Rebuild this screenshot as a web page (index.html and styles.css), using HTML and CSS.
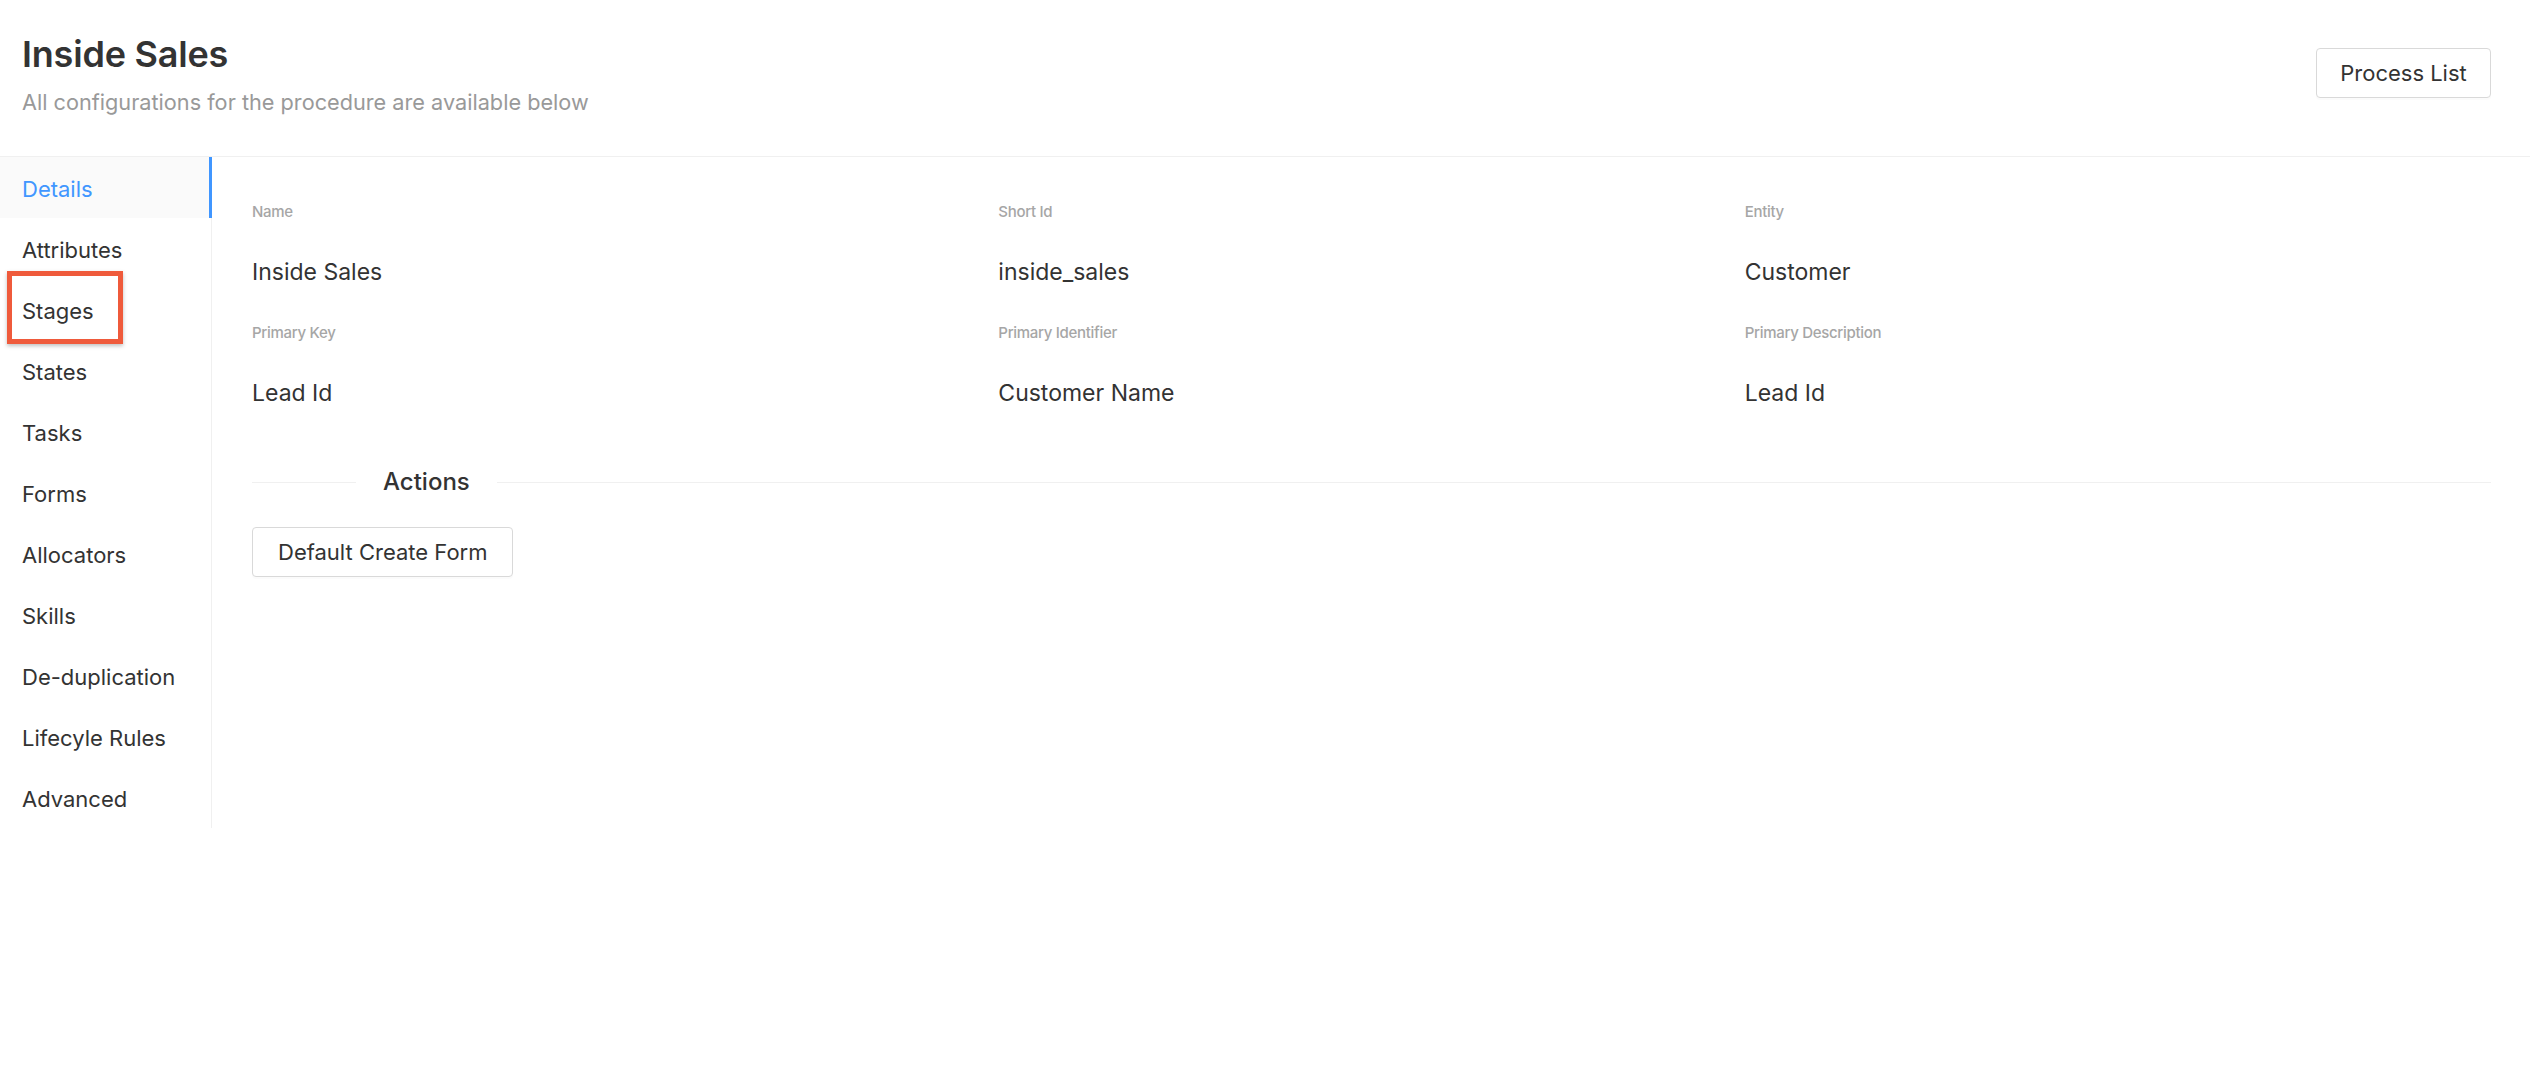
FILE: index.html
```html
<!DOCTYPE html>
<html lang="en">
<head>
  <meta charset="UTF-8">
  <meta name="viewport" content="width=device-width, initial-scale=1.0">
  <title>Inside Sales</title>
  <link rel="stylesheet" href="styles.css">
</head>
<body>
  <!-- Header -->
  <div class="page-header">
    <div class="heading">
      <h1 class="title">Inside Sales</h1>
      <div class="subtitle">All configurations for the procedure are available below</div>
    </div>
    <button class="btn btn-header">Process List</button>
  </div>

  <div class="layout">
    <!-- Left tabs -->
    <div class="side-nav">
      <div class="nav-item active">Details</div>
      <div class="nav-item">Attributes</div>
      <div class="nav-item">Stages</div>
      <div class="nav-item">States</div>
      <div class="nav-item">Tasks</div>
      <div class="nav-item">Forms</div>
      <div class="nav-item">Allocators</div>
      <div class="nav-item">Skills</div>
      <div class="nav-item">De-duplication</div>
      <div class="nav-item">Lifecyle Rules</div>
      <div class="nav-item">Advanced</div>
      <div class="highlight"></div>
    </div>

    <!-- Details -->
    <div class="content">
      <div class="details">
        <div class="field">
          <div class="label">Name</div>
          <div class="value">Inside Sales</div>
        </div>
        <div class="field">
          <div class="label">Short Id</div>
          <div class="value">inside_sales</div>
        </div>
        <div class="field">
          <div class="label">Entity</div>
          <div class="value">Customer</div>
        </div>
        <div class="field">
          <div class="label">Primary Key</div>
          <div class="value">Lead Id</div>
        </div>
        <div class="field">
          <div class="label">Primary Identifier</div>
          <div class="value">Customer Name</div>
        </div>
        <div class="field">
          <div class="label">Primary Description</div>
          <div class="value">Lead Id</div>
        </div>
      </div>

      <div class="divider">
        <span class="divider-text">Actions</span>
      </div>

      <button class="btn btn-action">Default Create Form</button>
    </div>
  </div>
</body>
</html>
```

FILE: styles.css
```css
/* General */
body {
  margin: 0;
  padding: 0;
  background-color: #ffffff;
  font-family: Inter, "Noto Sans", sans-serif;
  color: #333333;
}

.btn {
  background-color: #ffffff;
  color: #333333;
  border: 1px solid #d9d9d9;
  border-radius: 4px;
  height: 50px;
  font-family: inherit;
  font-size: 22px;
  box-shadow: 0 2px 0 rgba(0, 0, 0, 0.016);
  cursor: pointer;
}

/* Header */
.page-header {
  display: flex;
  justify-content: space-between;
  align-items: flex-start;
  padding: 32px 39px 39px 22px;
  border-bottom: 1px solid #f0f0f0;
}

.title {
  margin: 0;
  font-size: 36px;
  line-height: 44px;
  font-weight: 600;
  letter-spacing: -0.2px;
  color: #333333;
}

.subtitle {
  margin-top: 11px;
  font-size: 21.7px;
  line-height: 30px;
  color: #999999;
}

.btn-header {
  margin-top: 16px;
  width: 175px;
}

/* Layout */
.layout {
  display: flex;
}

.side-nav {
  position: relative;
  width: 211px;
  flex-shrink: 0;
  border-right: 1px solid #f0f0f0;
}

.nav-item {
  height: 61px;
  box-sizing: border-box;
  padding: 3px 22px 0;
  line-height: 58px;
  font-size: 22px;
  color: #333333;
}

.nav-item.active {
  background-color: #fafafa;
  color: #4096ff;
  border-right: 3px solid #4096ff;
  margin-right: -1px;
}

/* red annotation box around Stages */
.highlight {
  position: absolute;
  left: 7px;
  top: 114px;
  width: 116px;
  height: 73px;
  box-sizing: border-box;
  border: 5px solid #ef5a3b;
  box-shadow: 0 2px 4px rgba(0, 0, 0, 0.25);
}

/* Content */
.content {
  flex: 1;
  padding: 44px 39px 0 40px;
}

.details {
  display: grid;
  grid-template-columns: repeat(3, 1fr);
  row-gap: 34px;
}

.label {
  font-size: 15px;
  line-height: 22px;
  font-weight: 500;
  letter-spacing: -0.3px;
  color: #a6a6a6;
}

.value {
  margin-top: 33px;
  font-size: 23px;
  line-height: 32px;
  color: #333333;
}

/* Divider */
.divider {
  display: flex;
  align-items: center;
  margin-top: 57px;
}

.divider::before {
  content: "";
  width: 104px;
  border-top: 1px solid #f0f0f0;
}

.divider::after {
  content: "";
  flex: 1;
  border-top: 1px solid #f0f0f0;
}

.divider-text {
  padding: 0 27px;
  font-size: 24px;
  line-height: 32px;
  font-weight: 500;
  color: #333333;
}

.btn-action {
  margin-top: 29px;
  padding: 0 25px;
}
```
